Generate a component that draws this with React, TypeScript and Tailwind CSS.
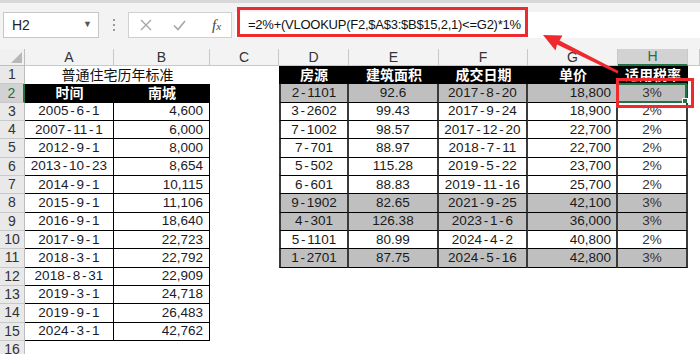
import React from "react";

const FONT = { fontFamily: '"Liberation Sans", "Noto Sans CJK SC", sans-serif' };

type Row = { dt: string; val: string };

const standards: Row[] = [
  { dt: "2005-6-1", val: "4,600" },
  { dt: "2007-11-1", val: "6,000" },
  { dt: "2012-9-1", val: "8,000" },
  { dt: "2013-10-23", val: "8,654" },
  { dt: "2014-9-1", val: "10,115" },
  { dt: "2015-9-1", val: "11,106" },
  { dt: "2016-9-1", val: "18,640" },
  { dt: "2017-9-1", val: "22,723" },
  { dt: "2018-3-1", val: "22,792" },
  { dt: "2018-8-31", val: "22,909" },
  { dt: "2019-3-1", val: "24,718" },
  { dt: "2019-9-1", val: "26,483" },
  { dt: "2024-3-1", val: "42,762" },
];

type Deal = { id: string; area: string; date: string; price: string; rate: string; gray?: boolean };

const deals: Deal[] = [
  { id: "2-1101", area: "92.6", date: "2017-8-20", price: "18,800", rate: "3%", gray: true },
  { id: "3-2602", area: "99.43", date: "2017-9-24", price: "18,900", rate: "2%" },
  { id: "7-1002", area: "98.57", date: "2017-12-20", price: "22,700", rate: "2%" },
  { id: "7-701", area: "88.97", date: "2018-7-11", price: "22,700", rate: "2%" },
  { id: "5-502", area: "115.28", date: "2019-5-22", price: "23,700", rate: "2%" },
  { id: "6-601", area: "88.83", date: "2019-11-16", price: "25,700", rate: "2%" },
  { id: "9-1902", area: "82.65", date: "2021-9-25", price: "42,100", rate: "3%", gray: true },
  { id: "4-301", area: "126.38", date: "2023-1-6", price: "36,000", rate: "3%", gray: true },
  { id: "5-1101", area: "80.99", date: "2024-4-2", price: "40,800", rate: "2%" },
  { id: "1-2701", area: "87.75", date: "2024-5-16", price: "42,800", rate: "3%", gray: true },
];

// excel draws the hyphen wider than arial does
const Dashed = ({ text }: { text: string }) => {
  const parts = text.split("-");
  return (
    <>
      {parts.map((p, i) => (
        <React.Fragment key={i}>
          {i > 0 && <span className="mx-[1.8px]">-</span>}
          {p}
        </React.Fragment>
      ))}
    </>
  );
};

const cols = ["A", "B", "C", "D", "E", "F", "G", "H", ""];

const RowHead = ({ n, active }: { n: number; active?: boolean }) => (
  <div
    className={
      "flex items-center justify-center border-b border-[#c8c8c8] text-[14px] " +
      (active
        ? "bg-[#d2d2d2] text-[#217346] border-r-2 border-r-[#217346]"
        : "bg-[#e9e9e9] text-[#333] border-r border-r-[#bdbdbd]")
    }
  >
    {n}
  </div>
);

const Empty = () => <div className="bg-white" />;

export default function App() {
  const rows: React.ReactNode[] = [];

  for (let r = 1; r <= 16; r++) {
    const cells: React.ReactNode[] = [];
    cells.push(<RowHead key="h" n={r} active={r === 2} />);

    // A, B
    if (r === 1) {
      cells.push(
        <div key="ab" className="col-span-2 flex items-center justify-center bg-white text-[14px] text-[#111]">
          普通住宅历年标准
        </div>
      );
    } else if (r === 2) {
      cells.push(
        <div key="a" className="flex items-center justify-center bg-black text-[14px] font-bold text-white">
          时间
        </div>,
        <div key="b" className="flex items-center justify-center bg-black text-[14px] font-bold text-white">
          南城
        </div>
      );
    } else if (r <= 15) {
      const s = standards[r - 3];
      cells.push(
        <div key="a" className="flex items-center justify-center border-b border-r border-black bg-white text-[13.5px] text-[#1a1a2a]">
          <Dashed text={s.dt} />
        </div>,
        <div key="b" className="flex items-center justify-end border-b border-r border-black bg-white pr-[6px] text-[13.5px] text-[#1a1a2a]">
          {s.val}
        </div>
      );
    } else {
      cells.push(<Empty key="a" />, <Empty key="b" />);
    }

    // C
    cells.push(<Empty key="c" />);

    // D - H
    if (r === 1) {
      ["房源", "建筑面积", "成交日期", "单价", "适用税率"].forEach((t, i) =>
        cells.push(
          <div key={"t" + i} className="flex items-center justify-center bg-black text-[14px] font-bold text-white">
            {t}
          </div>
        )
      );
    } else if (r <= 11) {
      const d = deals[r - 2];
      const bg = d.gray ? "bg-[#bfbfbf]" : "bg-white";
      const base = "flex items-center border-b border-b-black border-r-2 border-r-[#3a3a3a] text-[13.5px] text-[#1a1a1a] " + bg;
      cells.push(
        <div key="d" className={base + " justify-center border-l-2 border-l-[#3a3a3a]"}>
          <Dashed text={d.id} />
        </div>,
        <div key="e" className={base + " justify-center"}>{d.area}</div>,
        <div key="f" className={base + " justify-center"}>
          <Dashed text={d.date} />
        </div>,
        <div key="g" className={base + " justify-end pr-[5px]"}>{d.price}</div>,
        <div key="hh" className={base + " relative justify-center text-[#333]"}>
          {d.rate}
          {r === 2 && (
            <div className="absolute -inset-[1px] border-2 border-[#217346]">
              <div className="absolute -bottom-[3px] -right-[3px] h-[6px] w-[6px] border border-white bg-[#217346]" />
            </div>
          )}
        </div>
      );
    } else {
      for (let i = 0; i < 5; i++) cells.push(<Empty key={"e" + i} />);
    }

    cells.push(<Empty key="i" />);

    rows.push(<React.Fragment key={r}>{cells}</React.Fragment>);
  }

  return (
    <div className="relative h-[354px] w-[700px] overflow-hidden bg-white" style={FONT}>
      {/* formula bar */}
      <div className="h-[49px] border-t-[3px] border-[#d8d8d8] bg-[#f3f3f3]">
        <div className="flex items-center pt-[9px]">
          <div className="ml-[3px] flex h-[26px] w-[96px] items-center justify-between border border-[#c6c6c6] bg-white pl-[8px] pr-[6px] text-[14px] text-[#222]">
            <span>H2</span>
            <span className="text-[9px] text-[#555]">▼</span>
          </div>
          <div className="ml-[13px] flex w-[4px] flex-col items-center gap-[3px]">
            <span className="h-[2px] w-[2px] bg-[#9a9a9a]" />
            <span className="h-[2px] w-[2px] bg-[#9a9a9a]" />
            <span className="h-[2px] w-[2px] bg-[#9a9a9a]" />
          </div>
          <div className="ml-[12px] flex h-[26px] w-[104px] items-center border border-[#d0d0d0] bg-white">
            <svg className="ml-[11px]" width="12" height="12" viewBox="0 0 12 12">
              <path d="M1 1 L11 11 M11 1 L1 11" stroke="#a6a6a6" strokeWidth="1.4" fill="none" />
            </svg>
            <svg className="ml-[21px]" width="13" height="11" viewBox="0 0 13 11">
              <path d="M1 5.5 L5 9.5 L12 1" stroke="#a6a6a6" strokeWidth="1.6" fill="none" />
            </svg>
            <span
              className="ml-[26px] text-[15px] italic text-[#444]"
              style={{ fontFamily: '"Liberation Serif", serif' }}
            >
              f<span className="text-[11px]">x</span>
            </span>
          </div>
          <div className="ml-[3px] flex h-[26px] flex-1 items-center bg-white pl-[13px] text-[13px] tracking-[-0.25px] text-[#111]">
            =2%+(VLOOKUP(F2,$A$3:$B$15,2,1)&lt;=G2)*1%
          </div>
        </div>
      </div>

      {/* sheet */}
      <div className="grid grid-cols-[25px_89px_96px_69px_70px_90px_89px_90px_70px_1fr] grid-rows-[17px_repeat(16,18.33px)]">
        <div className="relative border-b border-r border-[#bdbdbd] bg-[#f0f0f0]">
          <div className="absolute bottom-[2px] right-[2px] h-0 w-0 border-b-[11px] border-l-[11px] border-b-[#b8b8b8] border-l-transparent" />
        </div>
        {cols.map((c, i) =>
          c === "H" ? (
            <div
              key={i}
              className="flex items-center justify-center border-b-2 border-r border-b-[#217346] border-r-[#c8c8c8] bg-[#d2d2d2] text-[14px] text-[#217346]"
            >
              {c}
            </div>
          ) : (
            <div
              key={i}
              className="flex items-center justify-center border-b border-r border-[#c8c8c8] bg-[#f3f3f3] text-[14px] text-[#333]"
            >
              {c}
            </div>
          )
        )}
        {rows}
      </div>

      {/* annotations */}
      <div className="absolute left-[237px] top-[7px] h-[30px] w-[291px] border-[3px] border-[#ee2a2e]" />
      <div className="absolute left-[616px] top-[78px] h-[30px] w-[78px] border-[3px] border-[#ee2a2e]" />
      <svg className="absolute left-0 top-0" width="700" height="354">
        <polygon
          points="543,35 562.5,35.5 559.5,40.5 618.5,71 617.5,73.5 557,44.5 555.5,50.5"
          fill="#ee2a2e"
        />
      </svg>
    </div>
  );
}
